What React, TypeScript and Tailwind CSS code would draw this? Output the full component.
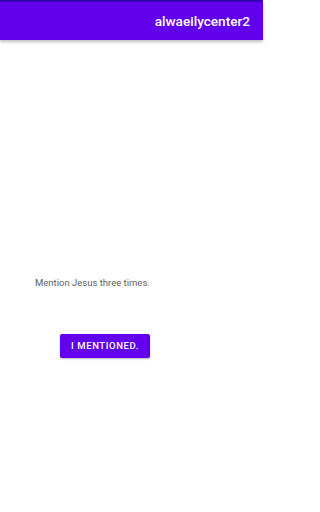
export default function App() {
  return (
    <div className="h-[512px] w-[263px] bg-white font-['Roboto',sans-serif] flex flex-col">
      {/* App bar */}
      <div className="h-[40px] bg-[#6200ee] border-t-2 border-[#3700b3] flex items-center justify-end pr-[13px] shadow-[0_2px_3px_rgba(0,0,0,0.25)]">
        <span className="text-white text-[13.6px] font-medium">alwaeilycenter2</span>
      </div>

      {/* Content */}
      <div className="flex flex-col pt-[236px] pl-[35px]">
        <p className="text-[9.5px] text-[#616161] leading-[14px]">Mention Jesus three times.</p>
        <button className="mt-[44px] ml-[25px] w-[90px] h-[24px] bg-[#6200ee] rounded-[2px] text-white text-[9.5px] font-medium tracking-[0.6px] shadow-[0_1px_2px_rgba(0,0,0,0.3)]">
          I MENTIONED.
        </button>
      </div>
    </div>
  );
}
